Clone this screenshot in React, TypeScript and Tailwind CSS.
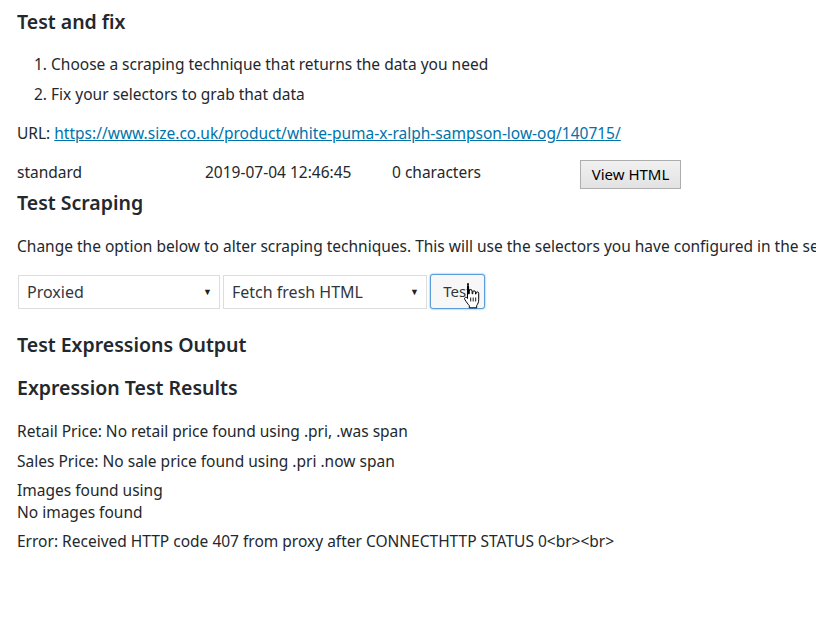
import React from 'react';

const font = { fontFamily: '"Noto Sans", sans-serif' };

const HandCursor: React.FC = () => (
  <svg width="20" height="27" viewBox="0 0 20 26" className="absolute left-[32px] top-[8px]">
    <path
      d="M5 1.5c.9 0 1.5.6 1.5 1.5v8.5l.8-.2V8.5c0-.9.6-1.4 1.4-1.4s1.4.5 1.4 1.4v2.8l.7-.1V9.6c0-.8.6-1.3 1.3-1.3s1.4.5 1.4 1.3v2l.6-.1v-.8c0-.8.6-1.3 1.3-1.3s1.3.5 1.3 1.3v6.5c0 2.7-.9 4.2-2 5.8v2.3H7.3v-2.2c-1.4-1.4-2.6-3.3-4.4-5.9-.6-.9-.4-1.8.3-2.2.7-.4 1.5-.2 2 .5l.3.5V3c0-.9.6-1.5 1.5-1.5z"
      fill="#fff"
      stroke="#000"
      strokeWidth="1"
      strokeLinejoin="round"
    />
    <path d="M8.7 15v4M11.2 15v4M13.7 15v4" stroke="#000" strokeWidth="0.9" />
  </svg>
);

const Select: React.FC<{ label: string; width: string }> = ({ label, width }) => (
  <div className={`${width} h-[34px] border border-[#dddddd] bg-white flex items-center justify-between pl-[8px] pr-[7px]`}>
    <span className="text-[16px] text-[#32373c]">{label}</span>
    <span className="text-[9px] text-[#222]">▼</span>
  </div>
);

const App: React.FC = () => {
  return (
    <div className="w-[816px] h-[635px] bg-white overflow-hidden text-[#23282d] text-[15.5px]" style={font}>
      <div className="pl-[17px] pt-[10px] whitespace-nowrap">
        <h2 className="text-[19.5px] leading-[24px] font-semibold">Test and fix</h2>

        <ol className="list-decimal list-inside mt-[20px] pl-[17px]">
          <li className="leading-[20px]">Choose a scraping technique that returns the data you need</li>
          <li className="leading-[20px] mt-[10px]">Fix your selectors to grab that data</li>
        </ol>

        <p className="mt-[19px] leading-[20px]">
          URL:{' '}
          <a href="#" className="text-[#0073aa] underline">
            https://www.size.co.uk/product/white-puma-x-ralph-sampson-low-og/140715/
          </a>
        </p>

        <div className="flex items-start mt-[17px] h-[29px]">
          <span className="w-[188px] leading-[20px] mt-[2px]">standard</span>
          <span className="w-[187px] leading-[20px] mt-[2px]">2019-07-04 12:46:45</span>
          <span className="w-[188px] leading-[20px] mt-[2px]">0 characters</span>
          <button className="w-[101px] h-[29px] border border-[#adadad] bg-gradient-to-b from-[#f0f0f0] to-[#e3e3e3] text-[15px] text-black">
            View HTML
          </button>
        </div>

        <h2 className="text-[19.5px] leading-[24px] font-semibold mt-[2px]">Test Scraping</h2>

        <p className="mt-[21px] leading-[20px]">
          Change the option below to alter scraping techniques. This will use the selectors you have configured in the settings.
        </p>

        <div className="flex items-center gap-[3px] mt-[18px] pl-[1px]">
          <Select label="Proxied" width="w-[202px]" />
          <Select label="Fetch fresh HTML" width="w-[204px]" />
          <div className="relative">
            <button className="w-[55px] h-[35px] border border-[#5b9dd9] rounded-[3px] bg-[#f7f7f7] text-[#32373c] text-[15px] shadow-[0_0_2px_rgba(30,140,190,0.8)]">
              Test
            </button>
            <HandCursor />
          </div>
        </div>

        <h2 className="text-[19.5px] leading-[24px] font-semibold mt-[24px]">Test Expressions Output</h2>
        <h2 className="text-[19.5px] leading-[24px] font-semibold mt-[19px]">Expression Test Results</h2>

        <p className="mt-[21px] leading-[20px]">Retail Price: No retail price found using .pri, .was span</p>
        <p className="mt-[10px] leading-[20px]">Sales Price: No sale price found using .pri .now span</p>
        <p className="mt-[8px] leading-[22px]">
          Images found using
          <br />
          No images found
        </p>
        <p className="mt-[8px] leading-[20px]">
          Error: Received HTTP code 407 from proxy after CONNECTHTTP STATUS 0&lt;br&gt;&lt;br&gt;
        </p>
      </div>
    </div>
  );
};

export default App;
